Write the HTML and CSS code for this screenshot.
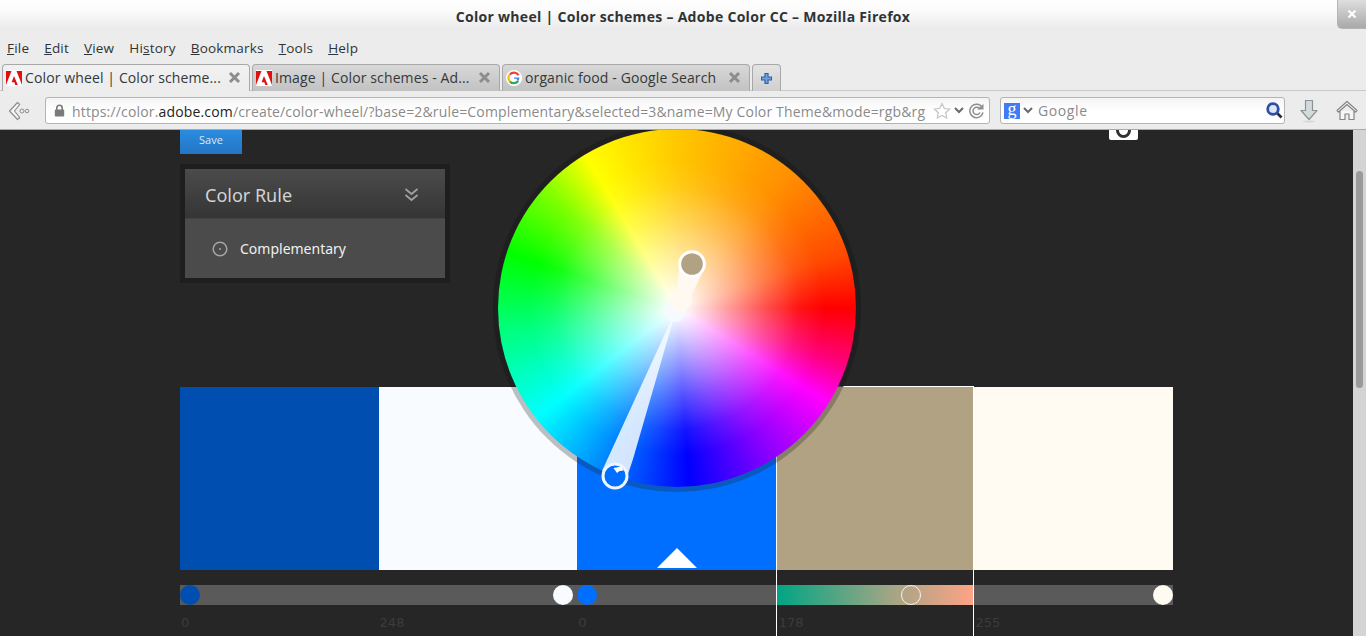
FILE: index.html
```html
<!DOCTYPE html>
<html lang="en">
<head>
<meta charset="utf-8">
<title>Color wheel | Color schemes - Adobe Color CC</title>
<link rel="stylesheet" href="styles.css">
</head>
<body>
<header class="chrome">
  <div class="titlebar">
    <span class="title">Color wheel | Color schemes – Adobe Color CC – Mozilla Firefox</span>
    <button class="winclose" aria-label="Close"><svg width="10" height="10" viewBox="0 0 10 10"><path d="M1.500 1.500l7 7M8.500 1.500l-7 7" stroke="#fff" stroke-width="2.200"/></svg></button>
  </div>
  <nav class="menubar">
    <span class="menu"><u>F</u>ile</span><span class="menu"><u>E</u>dit</span><span class="menu"><u>V</u>iew</span><span class="menu">Hi<u>s</u>tory</span><span class="menu"><u>B</u>ookmarks</span><span class="menu"><u>T</u>ools</span><span class="menu"><u>H</u>elp</span>
  </nav>
  <div class="tabstrip">
    <div class="tab tab-active">
      <svg class="fav" width="16" height="16" viewBox="0 0 16 16"><rect width="16" height="16" fill="#fff"/><path d="M0 1h5.500L0 15zM10.500 1H16v14zM8 6l3.800 9H9.300l-1-2.700H5.600z" fill="#e1100f"/></svg>
      <span class="tabtext">Color wheel | Color scheme...</span>
      <svg class="tabx" width="13" height="13" viewBox="0 0 13 13"><path d="M2 2l9 9M11 2l-9 9" stroke="#8d8d8d" stroke-width="3"/></svg>
    </div>
    <div class="tab">
      <svg class="fav" width="16" height="16" viewBox="0 0 16 16"><rect width="16" height="16" fill="#fff"/><path d="M0 1h5.500L0 15zM10.500 1H16v14zM8 6l3.800 9H9.300l-1-2.700H5.600z" fill="#e1100f"/></svg>
      <span class="tabtext">Image | Color schemes - Ad...</span>
      <svg class="tabx" width="13" height="13" viewBox="0 0 13 13"><path d="M2 2l9 9M11 2l-9 9" stroke="#8d8d8d" stroke-width="3"/></svg>
    </div>
    <div class="tab">
      <svg class="fav" width="16" height="16" viewBox="0 0 16 16"><circle cx="8" cy="8" r="8" fill="#fff"/><path d="M12.600 5.200A5.400 5.400 0 0 0 3.800 4.600" fill="none" stroke="#e94235" stroke-width="2.200"/><path d="M3.800 4.600a5.400 5.400 0 0 0 0 6.800" fill="none" stroke="#fabb05" stroke-width="2.200"/><path d="M3.800 11.400a5.400 5.400 0 0 0 8.400-.4" fill="none" stroke="#34a853" stroke-width="2.200"/><path d="M8 7.400h5.300c.2 1.500-.2 2.700-1.100 3.600L10.500 9.600c.4-.3.600-.6.700-.9H8z" fill="#4285f4"/></svg>
      <span class="tabtext">organic food - Google Search</span>
      <svg class="tabx" width="13" height="13" viewBox="0 0 13 13"><path d="M2 2l9 9M11 2l-9 9" stroke="#8d8d8d" stroke-width="3"/></svg>
    </div>
    <div class="tab tab-new">
      <svg width="13" height="13" viewBox="0 0 13 13"><path d="M6.500 1v11M1 6.500h11" stroke="#2f5f9f" stroke-width="4.200"/><path d="M6.500 2v9M2 6.500h9" stroke="#6f9fe0" stroke-width="2"/></svg>
    </div>
  </div>
  <div class="navbar">
    <svg class="back" width="22" height="20" viewBox="0 0 22 20"><path d="M9.500 1.500L1.500 10l8 8.500 2.200-2L6.500 10l5.200-6.500z" fill="#f3f3f3" stroke="#8f8f8f" stroke-width="1.200" stroke-linejoin="round"/><circle cx="14" cy="10" r="2" fill="none" stroke="#8f8f8f"/><circle cx="19" cy="10" r="1.800" fill="none" stroke="#8f8f8f"/></svg>
    <div class="urlbar">
      <svg class="lock" width="11" height="13" viewBox="0 0 11 13"><path d="M2.800 6V4a2.700 2.700 0 0 1 5.400 0v2" fill="none" stroke="#7b7b7b" stroke-width="1.600"/><rect x=".8" y="5.500" width="9.400" height="7" rx="1" fill="#7b7b7b"/></svg>
      <span class="url">https://color.<b>adobe.com</b>/create/color-wheel/?base=2&amp;rule=Complementary&amp;selected=3&amp;name=My Color Theme&amp;mode=rgb&amp;rg</span>
      <svg class="star" width="18" height="17" viewBox="0 0 18 17"><path d="M9 1.500l2.300 4.900 5.300.7-3.900 3.600 1 5.300L9 13.400 4.300 16l1-5.300L1.400 7.100l5.300-.7z" fill="#fff" stroke="#c9c9c9" stroke-width="1.300"/></svg>
      <svg width="10" height="7" viewBox="0 0 10 7"><path d="M1 1l4 4 4-4" fill="none" stroke="#6a6a6a" stroke-width="2"/></svg>
      <svg class="reload" width="17" height="17" viewBox="0 0 17 17"><path d="M14.500 6A6.700 6.700 0 1 0 15 10.500" fill="none" stroke="#8f8f8f" stroke-width="1.500"/><path d="M12 7.200A3.700 3.700 0 1 0 12 10.500" fill="none" stroke="#8f8f8f" stroke-width="1.500"/><path d="M9 7.500h6.500V2z" fill="#8f8f8f"/></svg>
    </div>
    <div class="searchbar">
      <span class="gicon">g</span>
      <svg width="10" height="7" viewBox="0 0 10 7"><path d="M1 1l4 4 4-4" fill="none" stroke="#6a6a6a" stroke-width="2"/></svg>
      <span class="searchtext">Google</span>
      <svg class="mag" width="17" height="17" viewBox="0 0 17 17"><path d="M11 11l4.500 4.500" stroke="#2b2b2b" stroke-width="2.600"/><circle cx="7" cy="7" r="5.300" fill="#dfe6f7" stroke="#2f4ea6" stroke-width="2.800"/></svg>
    </div>
    <svg class="dl" width="20" height="24" viewBox="0 0 20 24"><path d="M6.500 1.500h7v10H18L10 20.500 2 11.500h4.500z" fill="#d3dadb" stroke="#8a9494" stroke-width="1.200" stroke-linejoin="round"/><ellipse cx="10" cy="22.500" rx="6" ry="1" fill="#d8d8d8"/></svg>
    <svg class="home" width="22" height="21" viewBox="0 0 22 21"><path d="M1 10.500L11 1.500l10 9-1.500 1.500L11 4.500 2.500 12zM4 11V19.500h5v-5.500h4v5.500h5V11" fill="#f6f6f6" stroke="#858585" stroke-width="1.200" stroke-linejoin="round"/></svg>
  </div>
</header>

<div class="viewport">
  <main class="page">
    <div class="workspace">
      <button class="save">Save</button>
      <section class="rule">
        <div class="rule-head">
          <span>Color Rule</span>
          <svg width="15" height="15" viewBox="0 0 15 15"><path d="M1.500 2l6 5 6-5M1.500 8l6 5 6-5" fill="none" stroke="#a0a0a0" stroke-width="1.800"/></svg>
        </div>
        <div class="rule-body">
          <svg width="16" height="16" viewBox="0 0 16 16"><circle cx="8" cy="8" r="6.800" fill="none" stroke="#a5a5a5" stroke-width="1.500"/><circle cx="8" cy="8" r="1" fill="#a5a5a5"/></svg>
          <span>Complementary</span>
        </div>
      </section>
      <div class="camera"><span class="camera-ring"></span></div>
    </div>

    <div class="swatches">
      <div class="col"><div class="swatch c1"></div><div class="track"><i class="knob k-left c1"></i></div><span class="val">0</span></div>
      <div class="col"><div class="swatch c2"></div><div class="track"><i class="knob k-right-in c2"></i></div><span class="val">248</span></div>
      <div class="col"><div class="swatch c3"><span class="pointer"></span></div><div class="track"><i class="knob k-left c3"></i></div><span class="val">0</span></div>
      <div class="col col-sel"><div class="swatch c4"></div><div class="track track-grad"><i class="knob k-ring"></i></div><span class="val">178</span></div>
      <div class="col"><div class="swatch c5"></div><div class="track"><i class="knob k-right c5"></i></div><span class="val">255</span></div>
    </div>

    <div class="wheel">
      <div class="wheel-face"></div>
      <svg class="wheel-marks" width="358" height="358" viewBox="0 0 358 358">
        <path d="M173.700 190L104 342 130 345 135 330 175.500 190z" fill="#f6faff" fill-opacity=".86"/>
        <circle cx="177" cy="182" r="11" fill="#f6faff"/>
        <path d="M178.700 168L181 138 203.700 145 192.700 168z" fill="#fff9f1"/>
        <circle cx="183" cy="171" r="11" fill="#fff9f1"/>
        <circle cx="117" cy="347" r="12" fill="#006fff" stroke="#eef5ff" stroke-width="3"/>
        <path d="M115.500 339l8-1.500 2 4-4 .5-2.500 2z" fill="#fff"/>
        <circle cx="194" cy="135" r="12.300" fill="#b1a283" stroke="#fff" stroke-width="3"/>
      </svg>
    </div>
  </main>
  <aside class="scrollbar"><span class="thumb"></span></aside>
</div>
</body>
</html>
```
FILE: styles.css
```css
* { box-sizing: border-box; }
html, body { margin: 0; height: 636px; overflow: hidden; }
body { font-family: "Open Sans", sans-serif; background: #262626; display: flex; flex-direction: column; }

.chrome { height: 130px; flex: none; background: #ececec; border-bottom: 1px solid #a9a9a9; color: #2e3436; }
.titlebar { height: 36px; position: relative; display: flex; justify-content: center; padding-top: 9px;
  background: linear-gradient(#fff 0, #fbfbfb 10px, #ececec 28px); }
.title { font: bold 14px "Open Sans", sans-serif; line-height: 16px; color: #2e3436; letter-spacing: .3px; }
.winclose { position: absolute; right: 0; top: 0; width: 29px; height: 29px; padding: 0; border: 1px solid #b5b5b5; border-width: 0 0 1px 1px;
  border-radius: 0 0 0 5px; background: linear-gradient(#dedede, #a9a9a9); display: flex; align-items: center; justify-content: center; }
.menubar { height: 28px; display: flex; gap: 15px; padding: 3px 0 0 7px; font-size: 13.5px; line-height: 19px; letter-spacing: .2px; color: #2e3436; }
.tabstrip { height: 27px; display: flex; padding-left: 2px; gap: 2px; border-bottom: 1px solid #c9c9c9; }
.tab { width: 248px; height: 27px; flex: none; display: flex; align-items: center; padding: 0 5px 1px 3px; gap: 3px;
  border: 1px solid #a8a8a8; border-bottom: 0; border-radius: 4px 4px 0 0; background: linear-gradient(#d8d8d8, #c2c2c2); font-size: 14px; letter-spacing: .12px; color: #33383a; }
.tab-active { background: linear-gradient(#f1f1f1, #ececec); }
.tabtext { flex: 1; white-space: nowrap; overflow: hidden; }
.fav { flex: none; }
.tabx { flex: none; margin-right: 3px; }
.tab-new { width: 29px; justify-content: center; padding: 0; background: linear-gradient(#e4e4e4, #cfcfcf); }
.navbar { height: 38px; display: flex; align-items: center; padding: 1px 8px 0 8px; }
.back { flex: none; margin-right: 15px; }
.urlbar, .searchbar { height: 27px; display: flex; align-items: center; border: 1px solid #b4b4b4; border-radius: 3px;
  background: linear-gradient(#f4f4f4, #fff 50%); font-size: 14px; }
.urlbar { width: 945px; flex: none; padding: 0 4px 0 8px; }
.lock { flex: none; margin-right: 7px; }
.url { flex: 1; padding-top: 1px; color: #8a8a8a; white-space: nowrap; overflow: hidden; letter-spacing: .16px; }
.url b { font-weight: normal; color: #222; }
.star { flex: none; margin: 0 3px 0 0; }
.reload { flex: none; margin-left: 4px; }
.searchbar { width: 285px; flex: none; margin-left: 10px; padding: 0 1px 0 3px; gap: 3px; }
.gicon { width: 16px; height: 16px; flex: none; background: #3f7cf6; color: #fff; font: 18px/13px "Liberation Serif", serif; text-align: center; }
.searchtext { flex: 1; color: #8a8a8a; margin-left: 2px; letter-spacing: .6px; }
.dl { flex: none; margin-left: 14px; }
.home { flex: none; margin-left: 17px; }

.viewport { flex: 1; display: flex; min-height: 0; }
.page { flex: 1; position: relative; overflow: hidden; padding: 0 180px; display: flex; flex-direction: column; background: #262626; }
.workspace { height: 257px; flex: none; position: relative; }
.save { display: block; width: 62px; height: 24px; padding: 0 0 6px; border: 0; background: linear-gradient(#2a8ce0, #2475c4); color: #dfeaf5; font: 11px "Open Sans", sans-serif; }
.rule { width: 270px; margin-top: 10px; border: 5px solid #1e1e1e; background: #4a4a4a; }
.rule-head { height: 50px; display: flex; align-items: center; justify-content: space-between; padding: 2px 26px 0 20px; background: linear-gradient(#4b4b4b, #353535);
  color: #d2d2d2; font: 18px "Noto Sans", sans-serif; border-bottom: 1px solid #434343; }
.rule-body { height: 59px; display: flex; align-items: center; gap: 12px; padding: 0 0 0 27px; color: #f0f0f0; font: 14px "Noto Sans", sans-serif; background: #4b4b4b; }
.camera { position: absolute; left: 929px; top: 0; width: 29px; height: 10px; background: #fff; border-radius: 0 0 2px 2px; overflow: hidden; }
.camera-ring { display: block; width: 15px; height: 15px; margin: -7px auto 0; border: 3px solid #333; border-radius: 50%; }

.swatches { display: grid; grid-template-columns: repeat(5, 1fr); }
.col { height: 250px; position: relative; }
.swatch { height: 183px; position: relative; }
.c1 { background: #004fb0; }
.c2 { background: #f8fbff; }
.c3 { background: #006fff; }
.c4 { background: #b1a283; }
.c5 { background: #fffaf2; }
.track { height: 20px; margin-top: 15px; background: #5a5a5a; position: relative; }
.track-grad { background: linear-gradient(90deg, #00a583, #a7a585 60%, #ffa285); }
.knob { position: absolute; top: 0; width: 20px; height: 20px; border-radius: 50%; }
.k-left { left: 0; }
.k-right { right: 0; }
.k-right-in { right: 4px; }
.k-ring { left: 124px; border: 1px solid #f4f4f4; }
.val { display: block; margin: 10px 0 0 1px; font: 13px "DejaVu Sans", sans-serif; line-height: 16px; color: #3c3c3c; }
.col-sel { margin-top: -1px; height: 251px; border: 1px solid #fff; border-bottom: 0; }
.col-sel .val { margin-left: 2px; }
.pointer { position: absolute; left: 80px; bottom: 2px; width: 0; height: 0; border: 20px solid transparent; border-top: 0; border-bottom: 20px solid #fff; }

.wheel { position: absolute; left: 493px; top: -6px; width: 368px; height: 368px; padding: 5px; border-radius: 50%; background: rgba(31,31,31,.28); }
.wheel::before { content: ""; position: absolute; inset: 0; border-radius: 50%; background: rgba(30,30,30,.75); clip-path: inset(0 0 105px 0); }
.wheel-face { position: absolute; left: 5px; top: 5px; width: 358px; height: 358px; border-radius: 50%;
  background:
    radial-gradient(circle closest-side, #fff 0, rgba(255,255,255,.92) 8%, rgba(255,255,255,.62) 28%, rgba(255,255,255,.3) 50%, rgba(255,255,255,.08) 68%, rgba(255,255,255,0) 82%),
    conic-gradient(#ffc800 0deg, #ff9000 40deg, #ff4a00 72deg, #f00 90deg, #ff0078 108deg, #f0f 122deg, #8000ff 150deg, #00f 176deg, #006eff 200deg, #0ff 232deg, #00ff80 262deg, #0f0 288deg, #80ff00 312deg, #ff0 329deg, #ffc800 360deg); }
.wheel-marks { position: absolute; left: 5px; top: 5px; overflow: visible; }

.scrollbar { width: 13px; flex: none; background: #d4d4d4; padding: 41px 3px 0; }
.thumb { display: block; height: 217px; border-radius: 4px; background: #9a9a9a; }
```
